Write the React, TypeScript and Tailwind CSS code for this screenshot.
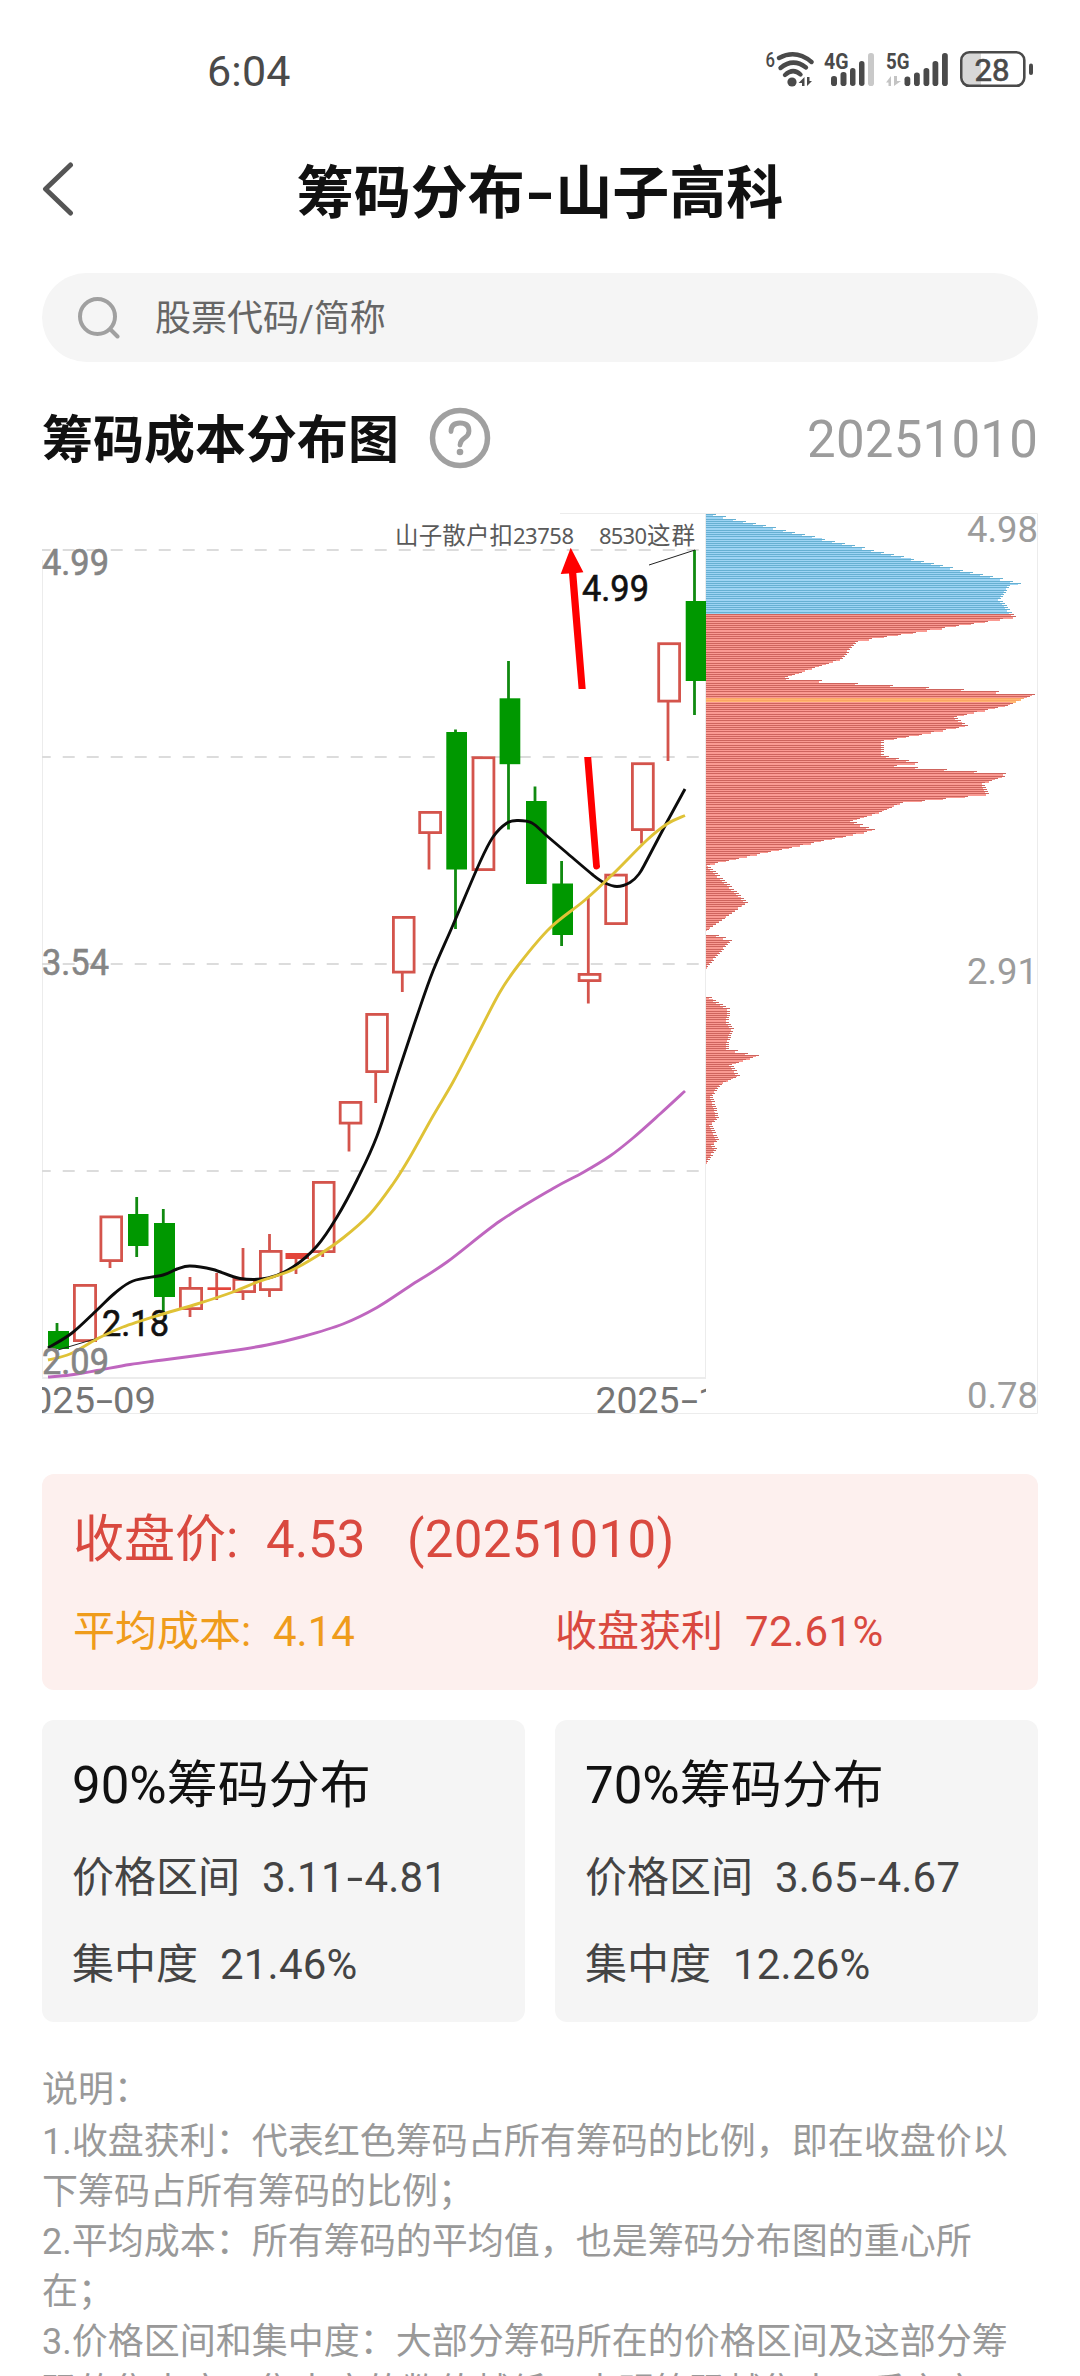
import type { ReactNode } from "react";

type Candle = {
  up: boolean;
  x: number;
  w: number;
  top: number;
  bottom: number;
  wick?: [number, number, number];
  solid?: boolean;
};

const candles: Candle[] = [
  { up: false, x: 48, w: 21, top: 1331, bottom: 1349, wick: [57, 1323, 1349] },
  { up: true, x: 73, w: 24, top: 1284, bottom: 1342 },
  { up: true, x: 99.5, w: 23.5, top: 1215.5, bottom: 1262, wick: [110, 1262, 1268] },
  { up: false, x: 128, w: 20.5, top: 1214, bottom: 1246, wick: [136.7, 1197, 1257] },
  { up: false, x: 154, w: 21, top: 1223, bottom: 1297, wick: [163.3, 1209, 1312] },
  { up: true, x: 179, w: 24, top: 1287, bottom: 1310, wick: [190, 1277, 1317] },
  { up: true, x: 207.5, w: 23.5, top: 1287.3, bottom: 1290, wick: [216.7, 1273, 1300], solid: true },
  { up: true, x: 232.5, w: 23.5, top: 1278, bottom: 1293, wick: [243, 1248, 1300] },
  { up: true, x: 259, w: 23.5, top: 1250, bottom: 1291, wick: [269.5, 1234, 1297] },
  { up: true, x: 285.5, w: 23.5, top: 1253, bottom: 1259, wick: [296, 1259, 1274], solid: true },
  { up: true, x: 312, w: 23.5, top: 1181, bottom: 1253, wick: [322.7, 1253, 1257] },
  { up: true, x: 338.8, w: 23.5, top: 1101, bottom: 1124.5, wick: [349, 1124, 1151.5] },
  { up: true, x: 365.3, w: 23.5, top: 1013, bottom: 1073, wick: [375.7, 1073, 1103] },
  { up: true, x: 392, w: 23.5, top: 916, bottom: 973.5, wick: [402.3, 973, 992] },
  { up: true, x: 418.3, w: 23.7, top: 811, bottom: 834, wick: [429, 834, 869.5] },
  { up: false, x: 446.3, w: 20.7, top: 732, bottom: 869.5, wick: [455.5, 729.5, 929] },
  { up: true, x: 471.6, w: 23.7, top: 756.3, bottom: 871 },
  { up: false, x: 499.6, w: 20.7, top: 698.3, bottom: 764.2, wick: [508.5, 661, 829.5] },
  { up: false, x: 526, w: 20.7, top: 801, bottom: 884, wick: [535, 786.5, 801] },
  { up: false, x: 552.3, w: 20.7, top: 883.5, bottom: 935, wick: [561.6, 861, 946] },
  { up: true, x: 577.7, w: 23.7, top: 973, bottom: 982, wick: [588.3, 898, 1003.5] },
  { up: true, x: 604.3, w: 23.5, top: 873.7, bottom: 925 },
  { up: true, x: 631, w: 23.7, top: 762.3, bottom: 831, wick: [641.5, 831, 843.5] },
  { up: true, x: 657.3, w: 23.7, top: 642.3, bottom: 702.5, wick: [668, 702, 761] },
  { up: false, x: 685.7, w: 20.6, top: 601, bottom: 681, wick: [694.5, 550, 715] },
];

type Point = [number, number];

const ma5: Point[] = [
  [48, 1348], [72, 1333], [97, 1310], [115, 1293], [133, 1281], [163, 1275], [177, 1269], [190, 1266],
  [213, 1269.5], [240, 1278.5], [268, 1278], [293, 1267], [317, 1246], [337, 1217], [357, 1180], [377, 1136],
  [400, 1067], [417, 1016], [433, 971], [453, 925], [480, 862], [493, 837], [507, 823],
  [518, 820.5], [532, 823], [547, 836], [567, 853], [593, 875], [604, 882.5], [617, 886.5], [630, 882.5], [639, 874],
  [647, 860], [667, 822], [685, 789],
];

const ma10: Point[] = [
  [48, 1360], [70, 1354], [97, 1339], [123, 1327], [163, 1314], [197, 1304], [233, 1292], [260, 1281],
  [290, 1271], [317, 1256], [343, 1238], [370, 1214], [393, 1184], [410, 1157], [433, 1116], [453, 1082],
  [477, 1036], [500, 992], [520, 963], [550, 928], [585, 900], [613, 874], [647, 840], [667, 824], [685, 815.5],
];

const ma30: Point[] = [
  [48, 1377], [70, 1375], [97, 1370.5], [130, 1364.5], [163, 1360], [230, 1351], [267, 1345], [303, 1336.5],
  [343, 1324], [377, 1307.5], [410, 1286], [447, 1262], [500, 1221], [553, 1188.5],
  [583, 1172.5], [610, 1156], [633, 1138], [660, 1114], [685, 1091],
];

// Outline of the chip distribution: [y, width]; null marks an empty price band
const chips: (Point | null)[] = [
  [514.6, 10], [583.3, 316], [585.6, 304], [599, 295], [614.3, 308], [616.6, 310], [619, 296], [641, 152],
  [658.7, 137], [676.7, 81], [679, 83], [681, 118], [694.4, 332], [696.7, 323], [705.3, 302], [716.7, 249],
  [725.6, 263], [738.7, 190], [740, 178], [755, 178], [763.3, 214], [765.4, 187], [774.3, 304], [783.3, 278],
  [794.3, 283], [796.4, 259], [803, 195], [811.7, 176], [820.7, 146], [829.7, 170], [863, 10], [865.3, 3],
  [902.3, 42], [929.3, 3], null, [933.7, 7], [940, 26], [967.3, 2], null, [995.7, 3], [1009, 24], [1022.3, 23],
  [1029, 28], [1042.3, 22.7], [1049, 23], [1055.7, 54], [1060, 39], [1064.3, 26], [1075.7, 34], [1084, 16],
  [1095.7, 7], [1117.7, 13], [1124.3, 6], [1140, 13], [1144.3, 8], [1149, 11], [1162, 2],
];

const ROW = 2.216;

function chipWidth(y: number) {
  for (let i = 0; i < chips.length - 1; i++) {
    const a = chips[i];
    const b = chips[i + 1];
    if (!a || !b) continue;
    if (y >= a[0] && y <= b[0]) {
      return a[1] + ((b[1] - a[1]) * (y - a[0])) / (b[0] - a[0]);
    }
  }
  return 0;
}

const chipRows = Array.from({ length: 293 }, (_, i) => {
  const y = 514.7 + i * ROW;
  return { y, w: chipWidth(y) };
}).filter((r) => r.w > 0);

function chipColors(y: number) {
  if (y < 613.5) return ["#9ed4f4", "#66b0d2"];
  if (y > 698 && y < 702.5) return ["#ffb872", "#fba564"];
  return ["#fa9a92", "#ce645d"];
}

function smooth(pts: Point[]) {
  let d = `M${pts[0][0]} ${pts[0][1]}`;
  for (let i = 0; i < pts.length - 1; i++) {
    const p0 = pts[i - 1] ?? pts[i];
    const p1 = pts[i];
    const p2 = pts[i + 1];
    const p3 = pts[i + 2] ?? p2;
    d += `C${p1[0] + (p2[0] - p0[0]) / 6} ${p1[1] + (p2[1] - p0[1]) / 6} ${p2[0] - (p3[0] - p1[0]) / 6} ${p2[1] - (p3[1] - p1[1]) / 6} ${p2[0]} ${p2[1]}`;
  }
  return d;
}

function CandleShape({ c }: { c: Candle }) {
  const color = c.up ? "#d4544c" : "#009800";
  return (
    <g>
      {c.wick ? (
        <line x1={c.wick[0]} x2={c.wick[0]} y1={c.wick[1]} y2={c.wick[2]} stroke={c.up ? color : "#108a10"} strokeWidth={2.8} />
      ) : null}
      {c.up && !c.solid ? (
        <rect x={c.x + 1.4} y={c.top + 1.4} width={c.w - 2.8} height={c.bottom - c.top - 2.8} fill="#fff" stroke={color} strokeWidth={2.8} />
      ) : (
        <rect x={c.x} y={c.top} width={c.w} height={c.bottom - c.top} fill={c.up ? "#e3453b" : color} />
      )}
    </g>
  );
}

function Chart() {
  return (
    <svg viewBox="42 508 997 910" width={997} height={910} className="block font-[Roboto,'Noto_Sans_CJK_SC',sans-serif]">
      <defs>
        <clipPath id="kline">
          <rect x={42} y={508} width={664} height={910} />
        </clipPath>
      </defs>

      {/* Frames and grid */}
      <g stroke="#ececec" strokeWidth={1}>
        <path d="M560 513.5H1037.5V1413.5H42" fill="none" />
        <path d="M42.5 560V1378M705.5 514V1378" fill="none" />
        <path d="M42 1378H706" strokeWidth={2} />
      </g>
      {[550, 757, 964, 1171].map((y) => (
        <line key={y} x1={38.7} x2={704} y1={y} y2={y} stroke="#dcdcdc" strokeWidth={2} strokeDasharray="12 12" clipPath="url(#kline)" />
      ))}

      {/* Chip distribution */}
      <g shapeRendering="crispEdges">
        {chipRows.map((r) => (
          <rect key={r.y} x={706} y={r.y - 0.6} width={Math.max(r.w - 3, 1)} height={ROW + 0.3} fill={chipColors(r.y)[0]} />
        ))}
        {chipRows.map((r) => (
          <rect key={r.y} x={706} y={Math.round(r.y - 0.5)} width={r.w} height={1} fill={chipColors(r.y)[1]} />
        ))}
      </g>

      {/* Candles and averages */}
      <g clipPath="url(#kline)">
        {candles.map((c) => (
          <CandleShape key={c.x} c={c} />
        ))}
        <path d="M649 565L695 550M58 1350L98 1338" stroke="#222" strokeWidth={1} fill="none" />
        <g fontSize={36} fill="#111" stroke="#111" strokeWidth={0.6}>
          <text x={582} y={601} textLength={67} lengthAdjust="spacingAndGlyphs">4.99</text>
          <text x={102} y={1336} textLength={67} lengthAdjust="spacingAndGlyphs">2.18</text>
        </g>
        <g fill="none" strokeWidth={2.9}>
          <path d={smooth(ma5)} stroke="#0c0c0c" />
          <path d={smooth(ma10)} stroke="#dfc236" />
          <path d={smooth(ma30)} stroke="#bf66bf" />
        </g>

        <g fontSize={36} fill="#858585" stroke="#858585" strokeWidth={0.6}>
          <text x={42} y={575} textLength={67} lengthAdjust="spacingAndGlyphs">4.99</text>
          <text x={42} y={975} textLength={67} lengthAdjust="spacingAndGlyphs">3.54</text>
          <text x={42} y={1374} textLength={67} lengthAdjust="spacingAndGlyphs">2.09</text>
        </g>
        <g fontSize={36.5} fill="#757575">
          <text x={31} y={1413} textLength={64} lengthAdjust="spacingAndGlyphs">025</text>
          <text x={96} y={1413} textLength={17} lengthAdjust="spacingAndGlyphs">-</text>
          <text x={113} y={1413} textLength={43} lengthAdjust="spacingAndGlyphs">09</text>
          <text x={595.5} y={1413} textLength={84} lengthAdjust="spacingAndGlyphs">2025</text>
          <text x={681} y={1413} textLength={17} lengthAdjust="spacingAndGlyphs">-</text>
          <text x={698} y={1413}>1</text>
        </g>
      </g>

      {/* Arrow */}
      <path d="M570.7 547.7L560.7 574L569 573.6L578.6 689H585.7L576.3 573L583.4 572.3Z" fill="#f00" />
      <path d="M584.2 757H591.2L599.8 865A3.3 3.3 0 0 1 593.2 867Z" fill="#f00" />

      <g className="font-['Noto_Sans','Noto_Sans_CJK_SC',sans-serif]" fill="#5a5a5a">
        <text x={395} y={544} fontSize={23.5} textLength={118}>山子散户扣</text>
        <text x={513} y={543.5} fontSize={22} textLength={61}>23758</text>
        <text x={599} y={543.5} fontSize={22} textLength={48}>8530</text>
        <text x={647} y={544} fontSize={23.5} textLength={48}>这群</text>
      </g>

      <g fontSize={37.5} fill="#9c9c9c">
        <text x={967} y={542} textLength={71} lengthAdjust="spacingAndGlyphs">4.98</text>
        <text x={967} y={984} textLength={71} lengthAdjust="spacingAndGlyphs">2.91</text>
        <text x={967} y={1408} textLength={71} lengthAdjust="spacingAndGlyphs">0.78</text>
      </g>
    </svg>
  );
}

function StatusBar() {
  return (
    <div className="flex h-[138px] shrink-0 items-center justify-between pr-[46px] pl-[207px]">
      <span className="pt-[3px] text-[43px] leading-[50px] tracking-[0.2px] text-[#4a4a4a]">6:04</span>
      <svg viewBox="764 46 270 44" width={270} height={44} className="font-[Roboto,sans-serif]" fill="#4a4a4a">
        <text x={765.5} y={66} fontSize={20} fontWeight={500} textLength={9.5} lengthAdjust="spacingAndGlyphs">6</text>
        <g fill="none" stroke="#4a4a4a" strokeWidth={4.4} strokeLinecap="round">
          <path d="M779 57Q796 48 811.5 61" />
          <path d="M780.5 67Q793 56.5 806 66.5" />
          <path d="M785 74Q793 66.5 800.5 73.5" />
        </g>
        <circle cx={792} cy={81} r={4.6} />
        <path d="M804.5 76V85H802V82H798.5ZM807 76V85L812 80H809.5V76Z" />
        <text x={824} y={68} fontSize={22} fontWeight={700} textLength={24.5} lengthAdjust="spacingAndGlyphs">4G</text>
        <text x={886} y={68} fontSize={22} fontWeight={700} textLength={23.5} lengthAdjust="spacingAndGlyphs">5G</text>
        <g>
          <rect x={831} y={75} width={6} height={10} rx={2.8} />
          <rect x={840.5} y={71} width={6} height={14} rx={2.8} />
          <rect x={850} y={67} width={5.5} height={18} rx={2.7} />
          <rect x={859} y={60} width={5.5} height={25} rx={2.7} />
          <rect x={868} y={52} width={6} height={33} rx={2.8} fill="#c9c9c9" />
        </g>
        <path d="M891 75V85H888.5V81.5H886ZM894 75V85L901 80H897V75Z" fill="#c4c4c4" />
        <g>
          <rect x={904.5} y={75.5} width={5.8} height={9.5} rx={2.8} />
          <rect x={914} y={71.5} width={5.8} height={13.5} rx={2.8} />
          <rect x={923.5} y={67} width={5.8} height={18} rx={2.8} />
          <rect x={932.5} y={60} width={5.8} height={25} rx={2.8} />
          <rect x={942} y={52} width={5.8} height={33} rx={2.8} />
        </g>
        <path d="M969 52H981V84H969Q963 84 963 77V59Q963 52 969 52Z" fill="#d8d8d8" />
        <rect x={961.3} y={51.3} width={63} height={33.5} rx={8} fill="none" stroke="#4a4a4a" strokeWidth={2.6} />
        <rect x={1029} y={62.5} width={4} height={11.5} rx={2} />
        <text x={974.5} y={79.5} fontSize={31} stroke="#4a4a4a" strokeWidth={0.7} textLength={35} lengthAdjust="spacingAndGlyphs">28</text>
      </svg>
    </div>
  );
}

function Dash() {
  return <span className="mx-[4px] inline-block origin-center scale-x-[1.4]">-</span>;
}

function Row({ label, children }: { label: string; children: ReactNode }) {
  return (
    <p className="mt-[27px] flex gap-[22px] text-[42px] leading-[60px] text-[#444]">
      <span>{label}</span>
      <span className="tracking-[0.2px]">{children}</span>
    </p>
  );
}

function RangeCard({ title, range, focus }: { title: string; range: [string, string]; focus: string }) {
  return (
    <section className="h-[302px] flex-1 rounded-xl bg-[#f5f5f5] px-[30px] pt-[31px]">
      <h3 className="text-[51px] leading-[70px] text-[#111]">{title}</h3>
      <Row label="价格区间">
        {range[0]}
        <Dash />
        {range[1]}
      </Row>
      <Row label="集中度">{focus}</Row>
    </section>
  );
}

export default function App() {
  return (
    <div className="flex h-[2376px] w-[1080px] flex-col overflow-hidden bg-white font-[Roboto,'Noto_Sans_CJK_SC',sans-serif]">
      <StatusBar />

      <header className="flex h-[106px] shrink-0 items-center px-[42px]">
        <svg width={32} height={54} viewBox="0 0 32 54" fill="none" stroke="#555" strokeWidth={5} strokeLinecap="round" strokeLinejoin="round" className="mb-[4px]">
          <path d="M28.5 3L3.5 27L28.5 51" />
        </svg>
        <h1 className="mr-[32px] flex-1 pt-[5px] text-center text-[57px] leading-[80px] font-bold text-[#111]">
          筹码分布<Dash />山子高科
        </h1>
      </header>

      <div className="mx-[42px] mt-[29px] flex h-[89px] shrink-0 items-center rounded-full bg-[#f5f5f5] pl-[36px]">
        <svg width={42} height={42} viewBox="0 0 42 42" fill="none" stroke="#a0a0a0" strokeWidth={4} strokeLinecap="round">
          <circle cx={19.5} cy={19.5} r={17.5} />
          <path d="M33 33L39.5 39.5" />
        </svg>
        <span className="ml-[35px] pt-[3px] text-[36px] leading-[50px] text-[#666]">股票代码/简称</span>
      </div>

      <div className="mx-[42px] mt-[36px] flex h-[80px] shrink-0 items-center">
        <h2 className="pt-[5px] text-[51px] leading-[70px] font-bold text-[#111]">筹码成本分布图</h2>
        <svg width={62} height={62} viewBox="0 0 62 62" fill="none" stroke="#a0a0a0" className="ml-[30px]">
          <circle cx={31} cy={31} r={27.5} strokeWidth={5.5} />
          <path d="M22 24.5Q22 16 31 16Q40 16 40 24Q40 28 35.5 31Q31 34 31 38" strokeWidth={4.8} strokeLinecap="round" />
          <circle cx={31} cy={45} r={3.3} fill="#a0a0a0" stroke="none" />
        </svg>
        <span className="ml-auto pt-[4px] text-[51px] leading-[70px] tracking-[0.2px] text-[#9c9c9c]">20251010</span>
      </div>

      <div className="mt-[30px] ml-[42px] shrink-0">
        <Chart />
      </div>

      <section className="mx-[42px] mt-[56px] h-[216px] shrink-0 rounded-xl bg-[#fdf0ee] px-[31px] pt-[31px] text-[#d9493f]">
        <div className="flex text-[51px] leading-[70px]">
          <span className="w-[193px]">收盘价:</span>
          <span className="w-[141px]">4.53</span>
          <span className="tracking-[0.3px]">(20251010)</span>
        </div>
        <div className="mt-[27px] flex text-[42px] leading-[60px]">
          <span className="w-[200px] text-[#ef9c1b]">平均成本:</span>
          <span className="w-[282px] text-[#ef9c1b]">4.14</span>
          <span className="w-[190px]">收盘获利</span>
          <span className="tracking-[0.4px]">72.61%</span>
        </div>
      </section>

      <div className="mx-[42px] mt-[30px] flex shrink-0 gap-[30px]">
        <RangeCard title="90%筹码分布" range={["3.11", "4.81"]} focus="21.46%" />
        <RangeCard title="70%筹码分布" range={["3.65", "4.67"]} focus="12.26%" />
      </div>

      <div className="mt-[43px] w-[1030px] shrink-0 pl-[42px] text-[36px] leading-[50px] text-[#999]">
        <p className="mb-[2px]">说明：</p>
        <p>1.收盘获利：代表红色筹码占所有筹码的比例，即在收盘价以</p>
        <p>下筹码占所有筹码的比例；</p>
        <p>2.平均成本：所有筹码的平均值，也是筹码分布图的重心所</p>
        <p>在；</p>
        <p>3.价格区间和集中度：大部分筹码所在的价格区间及这部分筹</p>
        <p>码的集中度，集中度的数值越低，表明筹码越集中，反之亦</p>
      </div>
    </div>
  );
}
